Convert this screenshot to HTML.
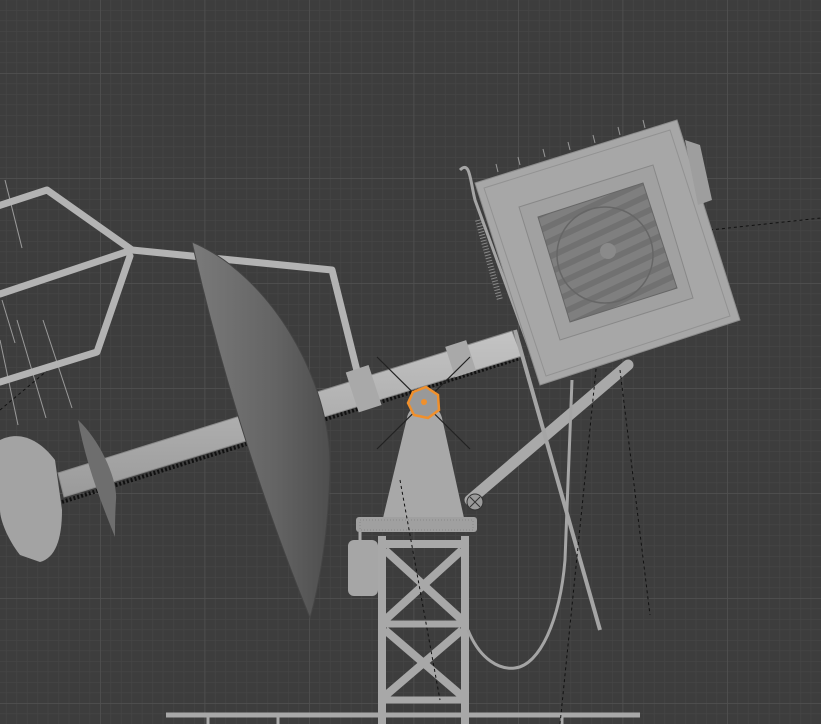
<!DOCTYPE html>
<html><head><meta charset="utf-8"><style>
html,body{margin:0;padding:0;background:#3d3d3d;overflow:hidden}
svg{display:block}
</style></head><body>
<svg width="821" height="724" viewBox="0 0 821 724" xmlns="http://www.w3.org/2000/svg">
<defs>
<pattern id="minor" width="10.45" height="10.5" patternUnits="userSpaceOnUse" x="100" y="73">
<path d="M0 0H10.45M0 0V10.5" stroke="#464646" stroke-width="1.2" fill="none"/>
</pattern>
<pattern id="major" width="104.5" height="105" patternUnits="userSpaceOnUse" x="100" y="73">
<path d="M0 0H104.5M0 0V105" stroke="#515151" stroke-width="1.5" fill="none"/>
</pattern>
<linearGradient id="dish" x1="0" y1="0" x2="1" y2="0">
<stop offset="0" stop-color="#7a7a7a"/><stop offset="0.6" stop-color="#646464"/><stop offset="1" stop-color="#4e4e4e"/>
</linearGradient>
<linearGradient id="tube" x1="0" y1="0" x2="0" y2="1">
<stop offset="0" stop-color="#c4c4c4"/><stop offset="1" stop-color="#9a9a9a"/>
</linearGradient>
<pattern id="stripe" width="14" height="14" patternUnits="userSpaceOnUse" patternTransform="rotate(-25)">
<rect width="14" height="14" fill="#7f7f7f"/><rect width="14" height="6" fill="#717171"/>
</pattern>
</defs>
<rect width="821" height="724" fill="#3d3d3d"/>
<rect width="821" height="724" fill="url(#minor)"/>
<rect width="821" height="724" fill="url(#major)"/>

<g stroke="#9a9a9a" stroke-width="1">
<line x1="5" y1="180" x2="22" y2="248"/>
<line x1="2" y1="300" x2="15" y2="343"/>
<line x1="17" y1="320" x2="46" y2="418"/>
<line x1="43" y1="320" x2="72" y2="408"/>
<line x1="0" y1="340" x2="18" y2="425"/>
</g>
<path d="M0 410 L60 360" stroke="#111" stroke-dasharray="3 3" fill="none"/>

<g stroke="#b3b3b3" stroke-width="7" fill="none" stroke-linejoin="round" stroke-linecap="round">
<polyline points="-5,207 47,190 132,250 332,270 360,383"/>
<polyline points="132,250 0,294"/>
<polyline points="130,256 97,352 0,382"/>
</g>

<path d="M62 502 L520 358" stroke="#111" stroke-width="4" stroke-dasharray="2 2" fill="none"/>
<path d="M58 473 L512 331 L522 356 L64 497 Z" fill="url(#tube)" stroke="#8a8a8a"/>

<path d="M0 440 C20 430 40 440 55 460 L62 510 C62 540 55 558 40 562 L20 555 C8 540 0 520 0 510 Z" fill="#a3a3a3"/>
<path d="M78 420 C100 440 118 480 116 500 C115 515 115 530 115 537 C100 500 85 460 78 420 Z" fill="#6e6e6e"/>
<path d="M192 242 C270 275 332 380 330 470 C328 540 318 590 310 618 C270 520 225 390 192 242 Z" fill="url(#dish)" stroke="#454545"/>

<rect x="352" y="368" width="24" height="42" fill="#a9a9a9" transform="rotate(-18 363 390)"/>
<rect x="450" y="343" width="22" height="32" fill="#a9a9a9" transform="rotate(-18 460 360)"/>

<path d="M470 500 L628 365" stroke="#a9a9a9" stroke-width="11" stroke-linecap="round"/>
<circle cx="475" cy="502" r="8" fill="#9a9a9a" stroke="#333"/>
<path d="M470 497 l10 10 M480 497 l-10 10" stroke="#333"/>

<path d="M407 418 C410 400 438 400 442 418 L464 518 L383 518 Z" fill="#a8a8a8"/>
<rect x="356" y="517" width="121" height="15" rx="3" fill="#a0a0a0"/>
<rect x="360" y="520" width="113" height="10" fill="none" stroke="#888" stroke-dasharray="1 2"/>

<rect x="348" y="540" width="30" height="56" rx="6" fill="#a6a6a6"/>
<line x1="360" y1="532" x2="360" y2="540" stroke="#aaa" stroke-width="3"/>

<g stroke="#a8a8a8" fill="none">
<line x1="382" y1="536" x2="382" y2="724" stroke-width="8"/>
<line x1="465" y1="536" x2="465" y2="724" stroke-width="8"/>
<line x1="380" y1="544" x2="468" y2="544" stroke-width="8"/>
<line x1="380" y1="624" x2="468" y2="624" stroke-width="7"/>
<line x1="380" y1="700" x2="468" y2="700" stroke-width="7"/>
<line x1="385" y1="550" x2="462" y2="620" stroke-width="8"/>
<line x1="462" y1="550" x2="385" y2="620" stroke-width="8"/>
<line x1="385" y1="630" x2="462" y2="696" stroke-width="8"/>
<line x1="462" y1="630" x2="385" y2="696" stroke-width="8"/>
</g>
<g stroke="#a8a8a8" fill="none">
<line x1="166" y1="715" x2="640" y2="715" stroke-width="5"/>
<line x1="208" y1="714" x2="208" y2="724" stroke-width="3"/>
<line x1="278" y1="714" x2="278" y2="724" stroke-width="3"/>
<line x1="562" y1="714" x2="562" y2="724" stroke-width="3"/>
</g>

<g stroke="#a5a5a5" fill="none" stroke-width="3">
<path d="M468 630 C480 660 500 670 515 668 C540 665 560 620 565 560 L572 380"/>
<line x1="515" y1="330" x2="600" y2="630" stroke-width="4"/>
<path d="M460 170 C470 160 470 180 475 200 L530 350" stroke-width="3"/>
</g>
<g stroke="#111" stroke-dasharray="3 3" fill="none">
<path d="M560 724 L600 330"/>
<path d="M620 370 L650 615"/>
<path d="M710 230 L821 218"/>
<path d="M400 480 L440 700"/>
</g>

<!-- box -->
<polygon points="475,183 677,120 740,320 540,385" fill="#a7a7a7" stroke="#8c8c8c"/>
<polygon points="484,188 670,130 730,316 546,376" fill="none" stroke="#929292"/>
<path d="M685 140 L700 145 L712 200 L698 205 Z" fill="#9e9e9e"/>
<polygon points="519,207 653,165 693,298 560,340" fill="#a1a1a1" stroke="#888"/>
<polygon points="538,217 643,183 677,288 570,322" fill="url(#stripe)" stroke="#666"/>
<circle cx="605" cy="255" r="48" fill="none" stroke="#666" stroke-width="1.5"/>
<circle cx="608" cy="251" r="8" fill="#8a8a8a"/>
<g stroke="#999" stroke-width="1">
<path d="M498 172 l-2 -8 M520 165 l-2 -8 M545 157 l-2 -8 M570 150 l-2 -8 M595 143 l-2 -8 M620 135 l-2 -8 M645 128 l-2 -8"/>
</g>
<path d="M478 220 L500 300" stroke="#888" stroke-width="6" stroke-dasharray="1 2"/>

<g stroke="#222" stroke-width="1.2">
<line x1="377" y1="357" x2="470" y2="449"/>
<line x1="470" y1="357" x2="377" y2="449"/>
</g>
<polygon points="413,392 426,387 438,395 439,410 428,418 414,415 408,403" fill="#999" stroke="#f0902c" stroke-width="2.5"/>
<circle cx="424" cy="402" r="3" fill="#f0902c"/>
</svg>
</body></html>
